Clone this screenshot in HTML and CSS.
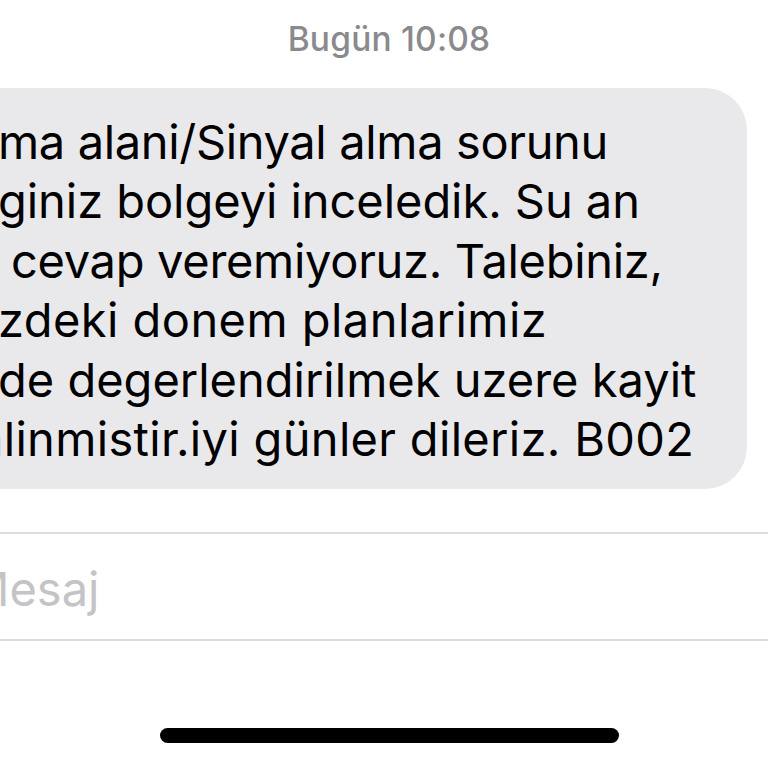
FILE: index.html
```html
<!DOCTYPE html>
<html lang="tr">
<head>
<meta charset="utf-8">
<title>Mesajlar</title>
<link rel="stylesheet" href="styles.css">
</head>
<body>
<div class="screen">
  <div class="timestamp">Bugün 10:08</div>
  <div class="thread">
    <div class="bubble">
      <div class="line line-1">ma alani/Sinyal alma sorunu</div>
      <div class="line line-2">giniz bolgeyi inceledik. Su an</div>
      <div class="line line-3">cevap veremiyoruz. Talebiniz,</div>
      <div class="line line-4">zdeki donem planlarimiz</div>
      <div class="line line-5">de degerlendirilmek uzere kayit</div>
      <div class="line line-6">alinmistir.iyi günler dileriz. B002</div>
    </div>
  </div>
  <div class="compose">
    <div class="placeholder">Mesaj</div>
  </div>
  <div class="home-area">
    <div class="home-indicator"></div>
  </div>
</div>
</body>
</html>
```
FILE: styles.css
```css
html, body {
  margin: 0;
  padding: 0;
  background: #ffffff;
}
body {
  width: 768px;
  height: 768px;
  overflow: hidden;
  font-family: Inter, "Noto Sans", "Liberation Sans", sans-serif;
}
.screen {
  width: 778px;
  display: flex;
  flex-direction: column;
}
.timestamp {
  text-align: center;
  color: #8a8a8e;
  font-size: 33.5px;
  font-weight: 500;
  line-height: 40px;
  padding-top: 19px;
  height: 40px;
  letter-spacing: 0.2px;
}
.thread {
  padding-top: 29px;
  display: flex;
}
.bubble {
  margin-left: -60px;
  width: 807px;
  background: #e9e9eb;
  border-radius: 42px;
  padding: 24px 0 20px 58px;
  box-sizing: border-box;
  height: 401px;
  color: #000;
  font-size: 47px;
  line-height: 59.4px;
  letter-spacing: -0.2px;
}
.line {
  white-space: nowrap;
}
.line-1 {
  letter-spacing: -0.35px;
}
.line-2 {
  letter-spacing: -0.05px;
}
.line-3 {
  padding-left: 13px;
  letter-spacing: -0.3px;
}
.line-4 {
  letter-spacing: 0.45px;
}
.line-5 {
  letter-spacing: 0;
}
.line-6 {
  margin-left: -21px;
  letter-spacing: 0.32px;
}
.compose {
  margin-top: 43px;
  height: 105px;
  border-top: 2px solid #dcdcdc;
  border-bottom: 2px solid #dcdcdc;
  display: flex;
  align-items: center;
}
.placeholder {
  margin-left: -33px;
  color: #c4c4c6;
  font-size: 47px;
  line-height: 56px;
  padding-top: 4px;
}
.home-area {
  display: flex;
  justify-content: center;
  padding-top: 87px;
}
.home-indicator {
  width: 459px;
  height: 15px;
  border-radius: 8px;
  background: #000;
}
```
